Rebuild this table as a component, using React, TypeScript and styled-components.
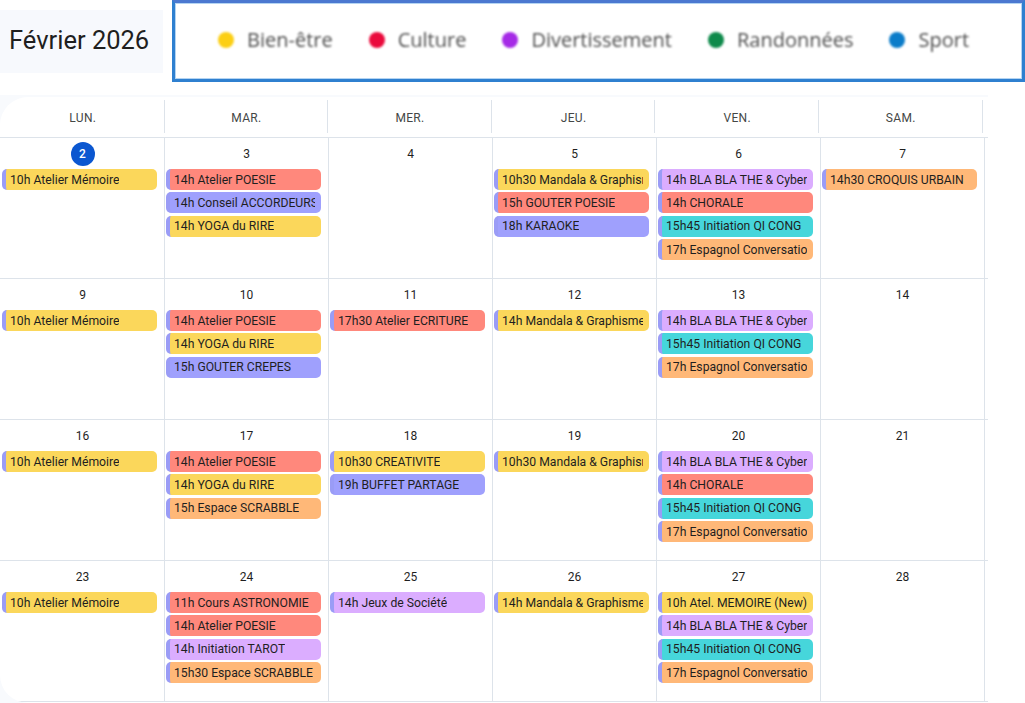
import React from "react";
import styled, { createGlobalStyle } from "styled-components";

const GlobalStyle = createGlobalStyle`
  html, body { margin: 0; padding: 0; background: #ffffff; }
  body { font-family: Roboto, "Liberation Sans", Arial, sans-serif; color: #1f1f1f; }
  * { box-sizing: border-box; }
`;

type Cat = "yellow" | "red" | "peri" | "lav" | "teal" | "orange";

const COLORS: Record<Cat, string> = {
  yellow: "#fbd75b",
  red: "#ff887c",
  peri: "#9fa0fd",
  lav: "#dbadff",
  teal: "#46d6db",
  orange: "#ffb878",
};

type Ev = [Cat, string];
type Day = { n: number; today?: boolean; events: Ev[] };

const weeks: Day[][] = [
  [
    { n: 2, today: true, events: [["yellow", "10h Atelier Mémoire"]] },
    { n: 3, events: [["red", "14h Atelier POESIE"], ["peri", "14h Conseil ACCORDEURS"], ["yellow", "14h YOGA du RIRE"]] },
    { n: 4, events: [] },
    { n: 5, events: [["yellow", "10h30 Mandala & Graphisme"], ["red", "15h GOUTER POESIE"], ["peri", "18h KARAOKE"]] },
    { n: 6, events: [["lav", "14h BLA BLA THE & Cyber"], ["red", "14h CHORALE"], ["teal", "15h45 Initiation QI CONG"], ["orange", "17h Espagnol Conversation"]] },
    { n: 7, events: [["orange", "14h30 CROQUIS URBAIN"]] },
  ],
  [
    { n: 9, events: [["yellow", "10h Atelier Mémoire"]] },
    { n: 10, events: [["red", "14h Atelier POESIE"], ["yellow", "14h YOGA du RIRE"], ["peri", "15h GOUTER CREPES"]] },
    { n: 11, events: [["red", "17h30 Atelier ECRITURE"]] },
    { n: 12, events: [["yellow", "14h Mandala & Graphisme"]] },
    { n: 13, events: [["lav", "14h BLA BLA THE & Cyber"], ["teal", "15h45 Initiation QI CONG"], ["orange", "17h Espagnol Conversation"]] },
    { n: 14, events: [] },
  ],
  [
    { n: 16, events: [["yellow", "10h Atelier Mémoire"]] },
    { n: 17, events: [["red", "14h Atelier POESIE"], ["yellow", "14h YOGA du RIRE"], ["orange", "15h Espace SCRABBLE"]] },
    { n: 18, events: [["yellow", "10h30 CREATIVITE"], ["peri", "19h BUFFET PARTAGE"]] },
    { n: 19, events: [["yellow", "10h30 Mandala & Graphisme"]] },
    { n: 20, events: [["lav", "14h BLA BLA THE & Cyber"], ["red", "14h CHORALE"], ["teal", "15h45 Initiation QI CONG"], ["orange", "17h Espagnol Conversation"]] },
    { n: 21, events: [] },
  ],
  [
    { n: 23, events: [["yellow", "10h Atelier Mémoire"]] },
    { n: 24, events: [["red", "11h Cours ASTRONOMIE"], ["red", "14h Atelier POESIE"], ["lav", "14h Initiation TAROT"], ["orange", "15h30 Espace SCRABBLE"]] },
    { n: 25, events: [["lav", "14h Jeux de Société"]] },
    { n: 26, events: [["yellow", "14h Mandala & Graphisme"]] },
    { n: 27, events: [["yellow", "10h Atel. MEMOIRE (New)"], ["lav", "14h BLA BLA THE & Cyber"], ["teal", "15h45 Initiation QI CONG"], ["orange", "17h Espagnol Conversation"]] },
    { n: 28, events: [] },
  ],
];

const dayNames = ["LUN.", "MAR.", "MER.", "JEU.", "VEN.", "SAM."];

const legend = [
  { c: "#fccf14", t: "Bien-être" },
  { c: "#ea0a3c", t: "Culture" },
  { c: "#a52ae6", t: "Divertissement" },
  { c: "#0e8a4b", t: "Randonnées" },
  { c: "#0b7cc9", t: "Sport" },
];

const Page = styled.div`
  width: 1025px;
  height: 703px;
  overflow: hidden;
  display: flex;
  flex-direction: column;
`;

const TopBar = styled.div`
  display: flex;
  align-items: flex-start;
  gap: 9px;
  height: 95px;
`;

const TitleBox = styled.div`
  margin-top: 10px;
  width: 163px;
  height: 63px;
  background: #f7f9fd;
  display: flex;
  align-items: center;
  padding: 0 0 4px 9px;
  font-family: Roboto, "Open Sans", sans-serif;
  font-size: 25.5px;
  color: #1f1f1f;
  white-space: nowrap;
`;

const LegendBox = styled.div`
  width: 853px;
  height: 82px;
  border: 3px solid #2f80d0;
  border-top-color: #4b78d0;
  box-shadow: inset 0 0 0 1px #b4d4f2;
  display: flex;
  align-items: center;
  padding: 0 0 3px 43px;
  gap: 36px;
  background: #ffffff;
`;

const LegendItem = styled.div`
  display: flex;
  align-items: center;
  gap: 13px;
  filter: blur(0.9px);
  font-family: "Open Sans", Roboto, sans-serif;
  font-size: 20px;
  color: #4e4e4e;
`;

const Dot = styled.span<{ $c: string }>`
  width: 16px;
  height: 16px;
  border-radius: 50%;
  background: ${(p) => p.$c};
  flex: none;
`;

const CalendarWrap = styled.div`
  width: 988px;
  background: #f8fafd;
  padding-top: 2px;
  flex: 1;
  display: flex;
`;

const Card = styled.div`
  flex: 1;
  background: #ffffff;
  border-radius: 28px 0 0 28px;
  display: flex;
  flex-direction: column;
  overflow: hidden;
`;

const HeaderRow = styled.div`
  display: grid;
  grid-template-columns: repeat(6, 163.6px);
  height: 41px;
  border-bottom: 1px solid #dde3ea;
  padding-left: 1px;
`;

const HeadCell = styled.div`
  position: relative;
  display: flex;
  align-items: center;
  justify-content: center;
  font-size: 12px;
  color: #444746;
  letter-spacing: 0.3px;
  padding-top: 1px;
  &::after {
    content: "";
    position: absolute;
    right: 0;
    top: 3px;
    bottom: 4px;
    width: 1px;
    background: #dde3ea;
  }
`;

const WeekRow = styled.div`
  display: grid;
  grid-template-columns: repeat(6, 164px);
  height: 141px;
  border-bottom: 1px solid #dde3ea;
  padding-left: 1px;
`;

const DayCell = styled.div`
  border-right: 1px solid #dde3ea;
  display: flex;
  flex-direction: column;
  padding: 4px 7px 0 1px;
`;

const DayNum = styled.div<{ $today?: boolean }>`
  align-self: center;
  width: 24px;
  height: 24px;
  border-radius: 50%;
  display: flex;
  align-items: center;
  justify-content: center;
  font-size: 12px;
  font-weight: ${(p) => (p.$today ? 500 : 400)};
  color: ${(p) => (p.$today ? "#ffffff" : "#1f1f1f")};
  background: ${(p) => (p.$today ? "#0b57d0" : "transparent")};
  margin-left: 6px;
`;

const EventList = styled.div`
  margin-top: 3px;
  display: flex;
  flex-direction: column;
  gap: 2.4px;
`;

const EventChip = styled.div<{ $bg: string }>`
  height: 21px;
  border-radius: 5px;
  background: ${(p) => p.$bg};
  border-left: 4px solid #9a9cf6;
  padding: 0 6px 0 4px;
  display: flex;
  align-items: center;
  font-size: 12.2px;
  color: #1f1f1f;
  white-space: nowrap;
  overflow: hidden;
`;

const ChipText = styled.span`
  overflow: hidden;
  display: block;
`;

export default function App() {
  return (
    <Page>
      <GlobalStyle />
      <TopBar>
        <TitleBox>Février 2026</TitleBox>
        <LegendBox>
          {legend.map((l) => (
            <LegendItem key={l.t}>
              <Dot $c={l.c} />
              {l.t}
            </LegendItem>
          ))}
        </LegendBox>
      </TopBar>
      <CalendarWrap>
        <Card>
          <HeaderRow>
            {dayNames.map((d) => (
              <HeadCell key={d}>{d}</HeadCell>
            ))}
          </HeaderRow>
          {weeks.map((w, i) => (
            <WeekRow key={i}>
              {w.map((d) => (
                <DayCell key={d.n}>
                  <DayNum $today={d.today}>{d.n}</DayNum>
                  <EventList>
                    {d.events.map(([c, t], k) => (
                      <EventChip key={k} $bg={COLORS[c]}>
                        <ChipText>{t}</ChipText>
                      </EventChip>
                    ))}
                  </EventList>
                </DayCell>
              ))}
            </WeekRow>
          ))}
        </Card>
      </CalendarWrap>
    </Page>
  );
}
